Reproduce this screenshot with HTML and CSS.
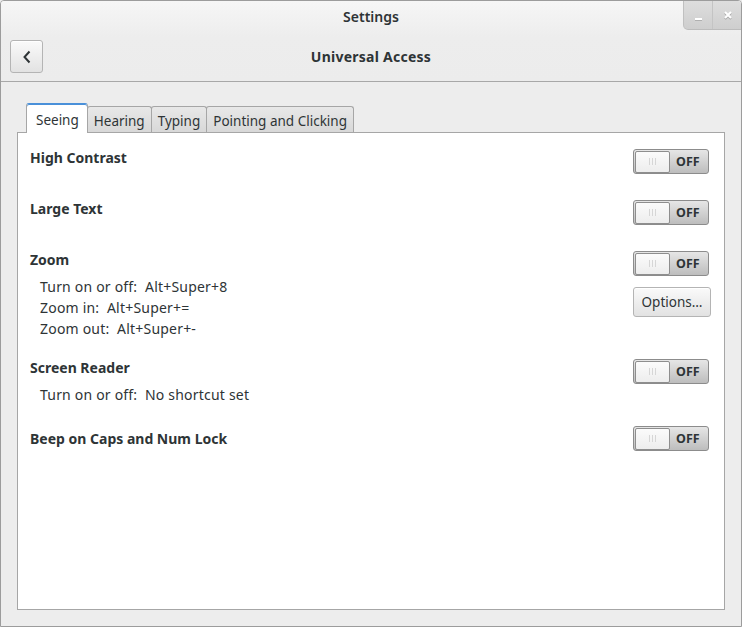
FILE: index.html
```html
<!DOCTYPE html>
<html>
<head>
<meta charset="utf-8">
<link rel="stylesheet" href="styles.css">
</head>
<body>
<div class="window">
  <div class="header">
    <div class="title-row">Settings</div>
    <div class="nav-row">
      <button class="back-btn" aria-label="Back">
        <svg width="10" height="14" viewBox="0 0 10 14"><path d="M7.5 1.5 L2.5 7 L7.5 12.5" fill="none" stroke="#2e3436" stroke-width="2"/></svg>
      </button>
      <div class="page-title">Universal Access</div>
      <div class="spacer"></div>
    </div>
    <div class="wm-buttons">
      <div class="wm-btn wm-min"><span class="min-glyph"></span></div>
      <div class="wm-btn wm-close">
        <svg width="10" height="10" viewBox="0 0 10 10"><path d="M2 2 L8 8 M8 2 L2 8" stroke="#a6a6a6" stroke-width="2.2" transform="translate(0,1)"/><path d="M2 2 L8 8 M8 2 L2 8" stroke="#ffffff" stroke-width="2"/></svg>
      </div>
    </div>
  </div>
  <div class="content">
    <div class="notebook">
      <div class="tabs">
        <div class="tab active">Seeing</div>
        <div class="tab">Hearing</div>
        <div class="tab">Typing</div>
        <div class="tab">Pointing and Clicking</div>
      </div>
      <div class="panel">
        <div class="item gap-lg">
          <div class="item-left"><div class="item-title">High Contrast</div></div>
          <div class="item-right"><div class="switch"><div class="knob"><span class="grip"></span></div><span class="off">OFF</span></div></div>
        </div>
        <div class="item gap-lg">
          <div class="item-left"><div class="item-title">Large Text</div></div>
          <div class="item-right"><div class="switch"><div class="knob"><span class="grip"></span></div><span class="off">OFF</span></div></div>
        </div>
        <div class="item gap-sm">
          <div class="item-left">
            <div class="item-title">Zoom</div>
            <div class="detail">Turn on or off:&nbsp; Alt+Super+8</div>
            <div class="detail">Zoom in:&nbsp; Alt+Super+=</div>
            <div class="detail">Zoom out:&nbsp; Alt+Super+-</div>
          </div>
          <div class="item-right">
            <div class="switch"><div class="knob"><span class="grip"></span></div><span class="off">OFF</span></div>
            <button class="options-btn">Options…</button>
          </div>
        </div>
        <div class="item gap-md">
          <div class="item-left">
            <div class="item-title">Screen Reader</div>
            <div class="detail">Turn on or off:&nbsp; No shortcut set</div>
          </div>
          <div class="item-right"><div class="switch"><div class="knob"><span class="grip"></span></div><span class="off">OFF</span></div></div>
        </div>
        <div class="item">
          <div class="item-left"><div class="item-title centered">Beep on Caps and Num Lock</div></div>
          <div class="item-right"><div class="switch"><div class="knob"><span class="grip"></span></div><span class="off">OFF</span></div></div>
        </div>
      </div>
    </div>
  </div>
</div>
</body>
</html>
```

FILE: styles.css
```css
* { box-sizing: border-box; }
html, body { margin: 0; padding: 0; }
body {
  width: 742px;
  height: 627px;
  font-family: "Noto Sans", "DejaVu Sans", sans-serif;
  font-size: 13px;
  color: #2e3436;
  background: #ededed;
  overflow: hidden;
}
.window {
  width: 742px;
  height: 627px;
  border: 1px solid #9c9c9c;
  border-radius: 4px 4px 0 0;
  display: flex;
  flex-direction: column;
  background: #ededed;
  overflow: hidden;
}
.header {
  position: relative;
  height: 81px;
  border-bottom: 1px solid #a8a8a8;
  background: linear-gradient(to bottom, #f6f6f6 0%, #ededed 45%, #ececec 100%);
  display: flex;
  flex-direction: column;
}
.title-row {
  height: 31px;
  line-height: 31px;
  text-align: center;
  font-size: 14px;
  font-weight: 600;
  color: #2e3436;
}
.nav-row {
  margin-top: 8px;
  padding: 0 9px;
  display: grid;
  grid-template-columns: 33px 1fr 33px;
  align-items: center;
}
.back-btn {
  width: 33px;
  height: 33px;
  padding: 0;
  border: 1px solid #b4b4b4;
  border-radius: 3px;
  background: linear-gradient(to bottom, #fafafa, #e2e2e2);
  display: flex;
  align-items: center;
  justify-content: center;
  box-shadow: inset 0 1px 0 #ffffff;
}
.back-btn svg { display: block; }
.page-title {
  text-align: center;
  font-size: 14px;
  font-weight: 700;
  letter-spacing: 0.25px;
  color: #2e3436;
}
.wm-buttons {
  position: absolute;
  top: -1px;
  right: -1px;
  height: 30px;
  display: flex;
  border-left: 1px solid #c0c0c0;
  border-bottom: 1px solid #bcbcbc;
  border-bottom-left-radius: 5px;
  background: linear-gradient(to bottom, #dedede, #cecece);
  overflow: hidden;
}
.wm-btn {
  width: 29px;
  height: 29px;
  display: flex;
  align-items: center;
  justify-content: center;
}
.wm-min { border-right: 1px solid #c4c4c4; }
.min-glyph {
  display: block;
  width: 7px;
  height: 2px;
  margin-top: 8px;
  background: #ffffff;
  box-shadow: 0 1px 0 #b0b0b0;
}
.content {
  flex: 1;
  padding: 21px 16px 16px 16px;
  display: flex;
}
.notebook {
  flex: 1;
  display: flex;
  flex-direction: column;
}
.tabs {
  display: flex;
  align-items: flex-end;
  padding-left: 9px;
  height: 29px;
}
.tab {
  height: 26px;
  padding: 5px 6px 0 6px;
  border: 1px solid #a6a6a6;
  border-bottom: none;
  border-radius: 3px 3px 0 0;
  background: linear-gradient(to bottom, #e8e8e8, #d8d8d8);
  font-size: 13.5px;
  color: #2e3436;
  margin-left: -1px;
}
.tab.active {
  height: 30px;
  margin-bottom: -1px;
  padding: 7px 8px 0 9px;
  background: #ffffff;
  border-color: #a6a6a6;
  border-top: 1px solid #4a90d9;
  box-shadow: inset 0 1px 0 #4a90d9;
  z-index: 1;
  margin-left: 0;
}
.panel {
  flex: 1;
  background: #ffffff;
  border: 1px solid #a6a6a6;
  padding: 16px 0 0 12px;
}
.item {
  display: flex;
  justify-content: space-between;
}
.gap-lg { margin-bottom: 26px; }
.gap-md { margin-bottom: 21px; }
.gap-sm { margin-bottom: 20px; }
.item-left {
  display: flex;
  flex-direction: column;
}
.item-title {
  height: 25px;
  line-height: 18px;
  font-weight: 700;
  font-size: 14px;
}
.item-title.centered { padding-top: 4px; }
.detail {
  height: 21px;
  line-height: 21px;
  padding-left: 10px;
  font-size: 14px;
  letter-spacing: 0.2px;
}
.item-right {
  width: 91px;
  display: flex;
  flex-direction: column;
  align-items: flex-start;
}
.switch {
  width: 76px;
  height: 25px;
  border: 1px solid #8c8c8c;
  border-radius: 3px;
  background: linear-gradient(to bottom, #e6e6e6, #bdbdbd);
  display: flex;
  align-items: center;
  padding: 0 0 0 1px;
}
.knob {
  width: 35px;
  height: 22px;
  border: 1px solid #8e8e8e;
  border-radius: 2px;
  background: linear-gradient(to bottom, #fbfbfb, #ededed);
  display: flex;
  align-items: center;
  justify-content: center;
}
.grip {
  width: 7px;
  height: 7px;
  background: repeating-linear-gradient(to right, #d6d6d6 0, #d6d6d6 1px, transparent 1px, transparent 3px);
}
.off {
  margin-left: 6px;
  font-weight: 700;
  font-size: 12.5px;
  color: #2e3436;
}
.options-btn {
  margin-top: 11px;
  width: 78px;
  height: 30px;
  padding: 0;
  border: 1px solid #b4b4b4;
  border-radius: 3px;
  background: linear-gradient(to bottom, #fafafa, #e2e2e2);
  font-family: "Noto Sans", "DejaVu Sans", sans-serif;
  font-size: 13.5px;
  color: #2e3436;
  box-shadow: inset 0 1px 0 #ffffff;
}
```
